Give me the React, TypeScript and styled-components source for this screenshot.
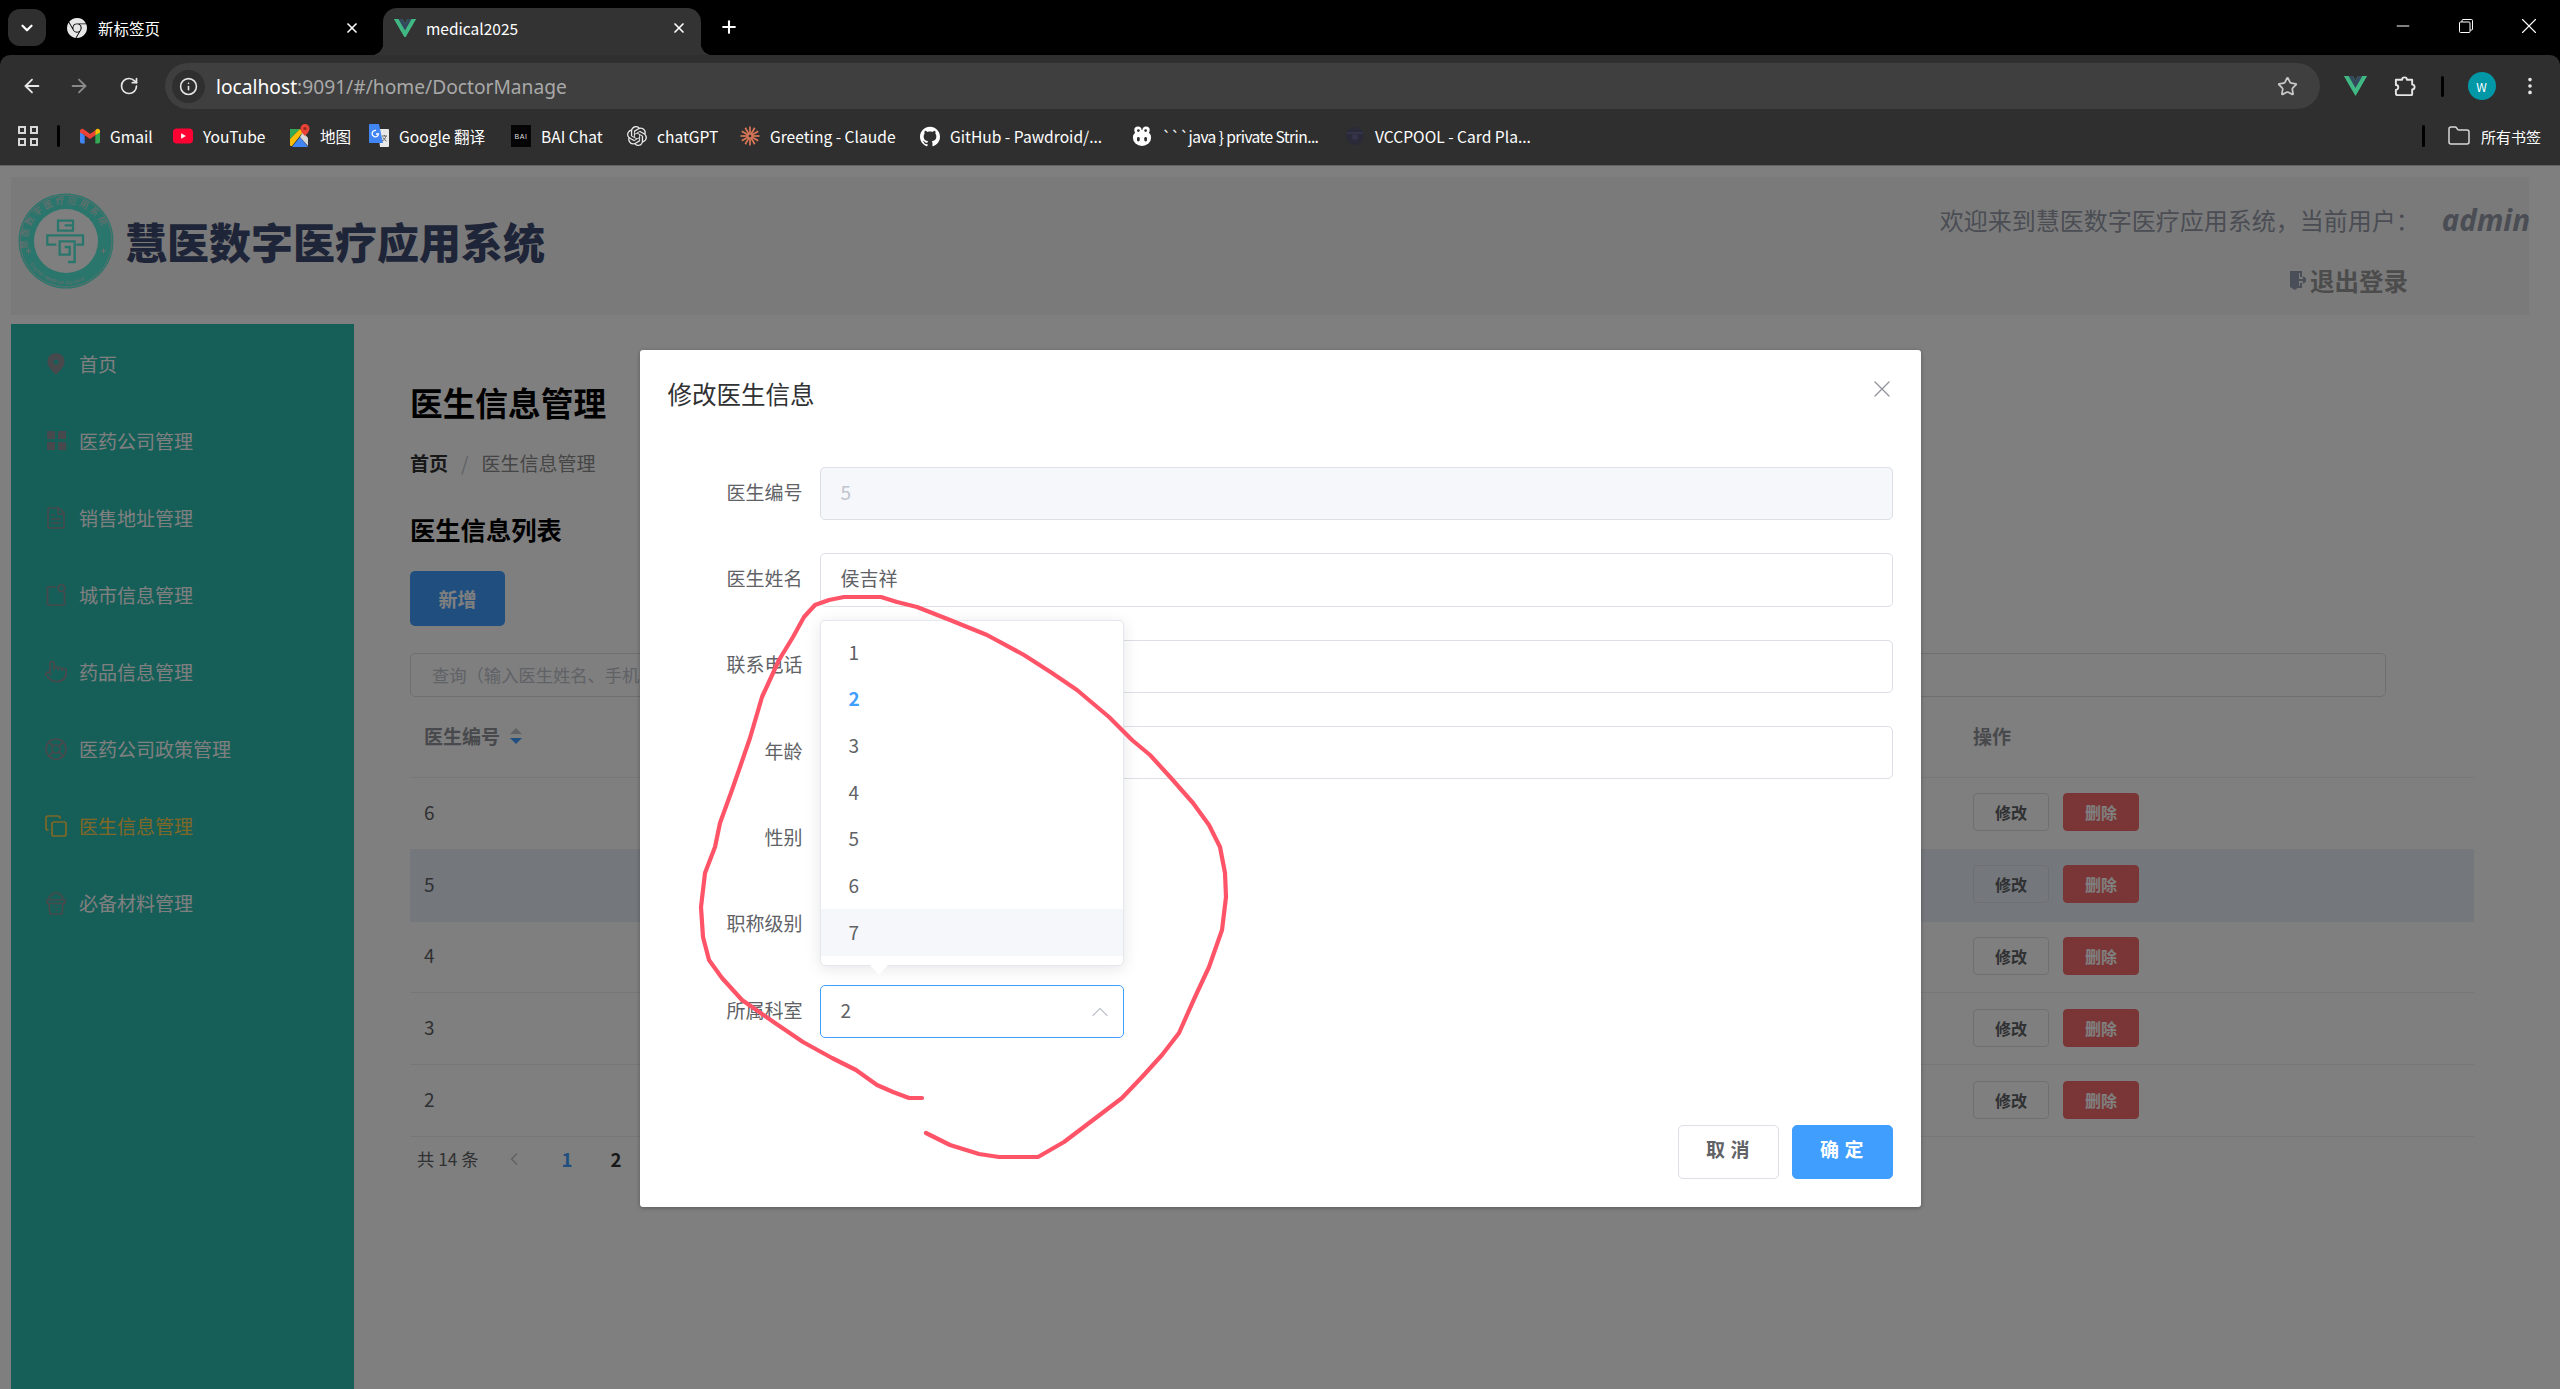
import React from "react";
import styled, { createGlobalStyle } from "styled-components";
import {
  ArrowLeft,
  ArrowRight,
  ChevronDown,
  ChevronLeft,
  ChevronUp,
  Copy,
  EllipsisVertical,
  FileText,
  Folder,
  Info,
  LifeBuoy,
  Minus,
  Plus,
  Pointer,
  RotateCw,
  Star,
  X,
} from "lucide-react";
import { SiGithub, SiGooglechrome, SiOpenai } from "react-icons/si";

const CJK = `"Noto Sans CJK SC", "Noto Sans", sans-serif`;

const GlobalStyle = createGlobalStyle`
  html, body { margin: 0; padding: 0; width: 2560px; height: 1389px; overflow: hidden; background: #000; }
  * { box-sizing: border-box; }
  body { font-family: ${CJK}; }
`;

const Root = styled.div`
  position: relative;
  width: 2560px;
  height: 1389px;
  display: flex;
  flex-direction: column;
`;

/* ---------- browser chrome ---------- */
const TabStrip = styled.div`
  height: 55px;
  background: #000;
  display: flex;
  align-items: flex-end;
  padding-left: 8px;
  color: #fff;
`;
const TabSwitcher = styled.div`
  width: 38px;
  height: 37px;
  margin-bottom: 9px;
  border-radius: 12px;
  background: #2f2f2f;
  display: flex;
  align-items: center;
  justify-content: center;
`;
const Tab = styled.div<{ $active?: boolean }>`
  position: relative;
  width: ${(p) => (p.$active ? 318 : 337)}px;
  height: 47px;
  display: flex;
  align-items: center;
  padding-left: ${(p) => (p.$active ? 11 : 21)}px;
  padding-bottom: 7px;
  border-radius: 14px 14px 0 0;
  background: ${(p) => (p.$active ? "#333" : "transparent")};
  font-size: 15.5px;
  ${(p) =>
    p.$active &&
    `
    &::before, &::after { content: ""; position: absolute; bottom: 0; width: 12px; height: 12px; }
    &::before { left: -12px; background: radial-gradient(circle at 0 0, transparent 12px, #333 12.5px); }
    &::after { right: -12px; background: radial-gradient(circle at 100% 0, transparent 12px, #333 12.5px); }
  `}
`;
const TabTitle = styled.span<{ $gap: number }>`
  flex: 1;
  margin-left: ${(p) => p.$gap}px;
`;
const TabClose = styled.div<{ $right: number }>`
  width: 16px;
  height: 16px;
  margin-right: ${(p) => p.$right}px;
  display: flex;
`;
const NewTab = styled.div`
  margin-left: 18px;
  margin-bottom: 10px;
  height: 36px;
  display: flex;
  align-items: center;
`;
const WindowControls = styled.div`
  margin-left: auto;
  height: 55px;
  display: flex;
  align-items: center;
  padding-bottom: 4px;
`;
const WindowButton = styled.div`
  width: 63px;
  display: flex;
  justify-content: center;
`;

const Toolbar = styled.div`
  height: 54px;
  background: #2f2f2f;
  border-radius: 10px 10px 0 0;
  display: flex;
  align-items: flex-start;
  padding: 8px 0 0 21px;
  color: #e6e6e6;
`;
const NavButton = styled.div<{ $w: number; $dim?: boolean }>`
  width: ${(p) => p.$w}px;
  height: 46px;
  display: flex;
  align-items: center;
  color: ${(p) => (p.$dim ? "#8a8a8a" : "#e6e6e6")};
`;
const AddressBar = styled.div`
  width: 2155px;
  height: 46px;
  border-radius: 23px;
  background: #3f3f3f;
  display: flex;
  align-items: center;
  padding: 0 22px 0 7px;
  margin-left: -1px;
`;
const SiteInfo = styled.div`
  width: 33px;
  height: 33px;
  border-radius: 50%;
  background: #2f2f2f;
  display: flex;
  align-items: center;
  justify-content: center;
`;
const Url = styled.div`
  flex: 1;
  margin-left: 11px;
  font-family: "Noto Sans", sans-serif;
  font-size: 19.2px;
  color: #a9a9a9;
  b { font-weight: 400; color: #fff; }
`;
const ToolIcons = styled.div`
  height: 46px;
  display: flex;
  align-items: center;
  padding-left: 24px;
`;
const ToolDivider = styled.div`
  width: 3px;
  height: 21px;
  border-radius: 2px;
  background: #000;
`;
const Avatar = styled.div`
  width: 28px;
  height: 28px;
  border-radius: 50%;
  background: #0097a7;
  color: #fff;
  font-size: 12px;
  display: flex;
  align-items: center;
  justify-content: center;
`;
const ToolSlot = styled.div<{ $w: number }>`
  width: ${(p) => p.$w}px;
  display: flex;
  justify-content: center;
`;

const BookmarkBar = styled.div`
  height: 57px;
  background: #2f2f2f;
  border-bottom: 1px solid #636363;
  display: flex;
  align-items: center;
  padding: 0 0 2px 18px;
  color: #fff;
  font-size: 15.6px;
`;
const AppsIcon = styled.div`
  width: 20px;
  height: 20px;
  display: grid;
  grid-template-columns: 8px 8px;
  grid-template-rows: 8px 8px;
  gap: 4px;
  span { border: 2px solid #d8d8d8; }
`;
const BarDivider = styled.div<{ $left: number; $right: number }>`
  width: 3px;
  height: 22px;
  border-radius: 2px;
  background: #000;
  margin: 0 ${(p) => p.$right}px 0 ${(p) => p.$left}px;
`;
const Bookmark = styled.div<{ $w: number; $track?: number }>`
  width: ${(p) => p.$w}px;
  display: flex;
  align-items: center;
  gap: 10px;
  white-space: nowrap;
  letter-spacing: ${(p) => p.$track ?? 0}px;
`;
const BookmarkIcon = styled.div`
  width: 20px;
  height: 22px;
  display: flex;
  align-items: center;
  justify-content: center;
  flex: none;
`;
const AllBookmarks = styled.div`
  display: flex;
  align-items: center;
  gap: 10px;
  font-size: 15px;
`;

/* ---------- page under the dialog ---------- */
const Page = styled.div`
  position: relative;
  flex: 1;
  background: #fff;
  padding: 11px 0 0 11px;
  overflow: hidden;
`;
const Header = styled.header`
  width: 2518px;
  height: 138px;
  background: #f5f5f5;
  display: flex;
  justify-content: space-between;
`;
const Brand = styled.div`
  display: flex;
  align-items: center;
  padding: 0 0 10px 7px;
`;
const BrandName = styled.div`
  margin-left: 11px;
  font-size: 42px;
  font-weight: 900;
  letter-spacing: 0;
  color: #3e4a70;
  line-height: 56px;
`;
const UserBox = styled.div`
  display: flex;
  flex-direction: column;
  align-items: flex-end;
  padding-top: 22px;
  gap: 21px;
`;
const Welcome = styled.div`
  height: 40px;
  display: flex;
  align-items: center;
  gap: 22px;
  font-size: 24px;
  color: #969ba8;
  margin-right: -1px;
  white-space: nowrap;
`;
const UserName = styled.span`
  font-family: "Noto Sans", sans-serif;
  font-size: 29.5px;
  font-weight: 700;
  font-style: italic;
`;
const Logout = styled.div`
  height: 40px;
  display: flex;
  align-items: center;
  gap: 4px;
  margin-right: 121px;
  font-size: 24.5px;
  font-weight: 700;
  color: #999;
`;
const Body = styled.div`
  display: flex;
  margin-top: 9px;
`;
const Sidebar = styled.nav`
  width: 343px;
  height: 1065px;
  background: #2cbdb0;
  padding-top: 1px;
`;
const NavItem = styled.div<{ $active?: boolean }>`
  height: 77px;
  display: flex;
  align-items: center;
  padding-left: 33px;
  font-size: 19px;
  color: ${(p) => (p.$active ? "#ffd04b" : "#fff")};
`;
const NavIcon = styled.div<{ $active?: boolean }>`
  width: 24px;
  height: 24px;
  margin-right: 11px;
  display: flex;
  align-items: center;
  justify-content: center;
  color: ${(p) => (p.$active ? "#ffd04b" : "#909399")};
`;
const Main = styled.main`
  flex: 1;
  padding: 56px 86px 0 56px;
`;
const PageTitle = styled.h2`
  margin: 0;
  font-size: 32.7px;
  line-height: 44px;
  font-weight: 700;
  color: #000;
`;
const Crumbs = styled.div`
  margin-top: 26px;
  height: 24px;
  display: flex;
  align-items: center;
  font-size: 19px;
  color: #8a8a8a;
`;
const CrumbHome = styled.b`
  color: #303133;
`;
const CrumbSep = styled.span`
  margin: 0 13px;
  color: #c0c4cc;
`;
const SectionTitle = styled.h3`
  margin: 38px 0 0;
  font-size: 25.3px;
  line-height: 34px;
  font-weight: 700;
  color: #000;
`;
const AddButton = styled.div`
  margin-top: 25px;
  width: 95px;
  height: 55px;
  border-radius: 5px;
  background: #409eff;
  color: #fff;
  font-size: 19px;
  font-weight: 700;
  display: flex;
  align-items: center;
  justify-content: center;
`;
const Search = styled.div`
  margin-top: 27px;
  width: 1976px;
  height: 44px;
  border: 1px solid #dcdfe6;
  border-radius: 5px;
  display: flex;
  align-items: center;
  padding: 0 0 2px 21px;
  font-size: 17.3px;
  color: #c0c4cc;
`;
const TableHead = styled.div`
  height: 81px;
  display: grid;
  grid-template-columns: 1563px 1fr;
  align-items: center;
  border-bottom: 1px solid #ebeef5;
  padding-bottom: 3px;
  font-size: 19px;
  font-weight: 700;
  color: #909399;
`;
const HeadCell = styled.div`
  display: flex;
  align-items: center;
  padding-left: 14px;
`;
const ActionHead = styled.div``;
const SortCaret = styled.div`
  margin-left: 10px;
  display: flex;
  flex-direction: column;
  gap: 4px;
`;
const CaretUp = styled.div`
  width: 0;
  height: 0;
  border: 6px solid transparent;
  border-top: 0;
  border-bottom: 6px solid #c0c4cc;
`;
const CaretDown = styled.div`
  width: 0;
  height: 0;
  border: 6px solid transparent;
  border-bottom: 0;
  border-top: 6px solid #409eff;
`;
const Row = styled.div<{ $current?: boolean }>`
  height: 71.8px;
  display: grid;
  grid-template-columns: 1563px 1fr;
  align-items: center;
  border-bottom: 1px solid #ebeef5;
  background: ${(p) => (p.$current ? "#e8eef8" : "transparent")};
  font-size: 19px;
  color: #606266;
`;
const IdCell = styled.div`
  padding: 0 0 4px 14px;
`;
const RowActions = styled.div`
  display: flex;
  gap: 14px;
  margin-bottom: 2px;
`;
const SmallButton = styled.div<{ $danger?: boolean }>`
  width: 76px;
  height: 38px;
  border-radius: 4px;
  border: 1px solid ${(p) => (p.$danger ? "#f56c6c" : "#dcdfe6")};
  background: ${(p) => (p.$danger ? "#f56c6c" : "transparent")};
  color: ${(p) => (p.$danger ? "#fff" : "#606266")};
  font-size: 16px;
  font-weight: 700;
  display: flex;
  align-items: center;
  justify-content: center;
`;
const Pagination = styled.div`
  height: 46px;
  display: flex;
  align-items: center;
  padding: 0 0 2px 7px;
  font-size: 17.3px;
  color: #606266;
`;
const PageArrow = styled.div`
  margin-left: 25px;
  display: flex;
  color: #c0c4cc;
`;
const PageNumber = styled.b<{ $active?: boolean; $gap: number }>`
  margin-left: ${(p) => p.$gap}px;
  font-size: 18.67px;
  color: ${(p) => (p.$active ? "#409eff" : "#303133")};
`;

/* ---------- dialog ---------- */
const Overlay = styled.div`
  position: absolute;
  inset: 0;
  background: rgba(0, 0, 0, 0.5);
  display: flex;
  justify-content: center;
  padding-top: 184px;
`;
const Dialog = styled.div`
  position: relative;
  width: 1281px;
  height: 857px;
  border-radius: 3px;
  background: #fff;
  box-shadow: 0 1px 4px rgba(0, 0, 0, 0.3);
  display: flex;
  flex-direction: column;
  padding: 0 28px 28px;
`;
const DialogHeader = styled.div`
  height: 117px;
  display: flex;
  justify-content: space-between;
  padding-top: 26px;
`;
const DialogTitle = styled.div`
  font-size: 24.5px;
  line-height: 36px;
  color: #303133;
`;
const DialogClose = styled.div`
  display: flex;
  color: #909399;
  margin: -1px -3px 0 0;
`;
const FormRow = styled.div`
  display: flex;
  align-items: center;
  height: 53.33px;
  margin-bottom: 33px;
`;
const FormLabel = styled.div`
  width: 135px;
  margin-right: 17px;
  padding-bottom: 5px;
  text-align: right;
  font-size: 19px;
  color: #606266;
  white-space: nowrap;
`;
const Field = styled.div<{ $disabled?: boolean; $short?: boolean; $focus?: boolean }>`
  width: ${(p) => (p.$short ? "304px" : "1073px")};
  height: 53.33px;
  border: 1px solid ${(p) => (p.$focus ? "#409eff" : "#dcdfe6")};
  border-radius: 5px;
  background: ${(p) => (p.$disabled ? "#f5f7fa" : "#fff")};
  color: ${(p) => (p.$disabled ? "#c0c4cc" : "#606266")};
  font-size: 19px;
  display: flex;
  align-items: center;
  justify-content: space-between;
  padding: 0 9px 0 20px;
`;
const FieldText = styled.span`
  padding-bottom: 5px;
`;
const Footer = styled.div`
  margin-top: auto;
  display: flex;
  justify-content: flex-end;
  gap: 13px;
`;
const DialogButton = styled.div<{ $primary?: boolean }>`
  width: 101px;
  height: 54px;
  border-radius: 5px;
  border: 1px solid ${(p) => (p.$primary ? "#409eff" : "#dcdfe6")};
  background: ${(p) => (p.$primary ? "#409eff" : "#fff")};
  color: ${(p) => (p.$primary ? "#fff" : "#606266")};
  font-size: 19px;
  font-weight: 700;
  letter-spacing: 0.5px;
  white-space: pre;
  display: flex;
  align-items: center;
  justify-content: center;
  padding-bottom: 7px;
`;
const Dropdown = styled.div`
  position: absolute;
  left: 180px;
  top: 270px;
  width: 304px;
  height: 346px;
  padding-top: 8px;
  background: #fff;
  border: 1px solid #e4e7ed;
  border-radius: 5px;
  box-shadow: 0 3px 16px rgba(0, 0, 0, 0.1);
  &::after {
    content: "";
    position: absolute;
    left: 52px;
    bottom: -7px;
    width: 12px;
    height: 12px;
    background: #fff;
    transform: rotate(45deg);
  }
`;
const Option = styled.div<{ $selected?: boolean; $hover?: boolean }>`
  height: 46.67px;
  display: flex;
  align-items: center;
  padding: 0 0 2px 28px;
  font-size: 19px;
  font-weight: ${(p) => (p.$selected ? 700 : 400)};
  color: ${(p) => (p.$selected ? "#409eff" : "#606266")};
  background: ${(p) => (p.$hover ? "#f5f7fa" : "transparent")};
`;
const Scribble = styled.svg`
  position: absolute;
  left: 0;
  top: 0;
  pointer-events: none;
`;

/* ---------- small drawings ---------- */
const VueLogo = ({ size }: { size: number }) => (
  <svg width={size} height={size * 0.86} viewBox="0 0 256 221">
    <path d="M204.8 0H256L128 220.8 0 0h97.92L128 51.2 157.44 0h47.36Z" fill="#41B883" />
    <path d="M0 0l128 220.8L256 0h-51.2L128 132.48 50.56 0H0Z" fill="#41B883" />
    <path d="M50.56 0L128 133.12 204.8 0h-47.36L128 51.2 97.92 0H50.56Z" fill="#35495E" />
  </svg>
);
const PuzzlePiece = () => (
  <svg width="23" height="23" viewBox="0 0 24 24" fill="none" stroke="#e6e6e6" strokeWidth="2" strokeLinejoin="round">
    <path d="M3 5h6.500a2.500 2.500 0 0 1 5 0H20v5a2.500 2.500 0 0 1 0 5v5a1 1 0 0 1-1 1H5a2 2 0 0 1-2-2v-3.500a2.500 2.500 0 0 0 0-5z" />
  </svg>
);
const RestoreIcon = () => (
  <svg width="14" height="14" viewBox="0 0 14 14" fill="none" stroke="#fff" strokeWidth="1">
    <rect x="0.500" y="3" width="10.500" height="10.500" rx="1" />
    <path d="M3 3V1.500a1 1 0 0 1 1-1h8.500a1 1 0 0 1 1 1V10a1 1 0 0 1-1 1H11" />
  </svg>
);
const GmailIcon = () => (
  <svg width="20" height="16" viewBox="0 0 24 18">
    <path d="M0 4v12a2 2 0 0 0 2 2h3.6V8z" fill="#4285f4" />
    <path d="M24 4v12a2 2 0 0 1-2 2h-3.6V8z" fill="#34a853" />
    <path d="M0 3C0 .8 2.5-.5 4.3.9L12 6.7V11L0 4.8Z" fill="#ea4335" />
    <path d="M5.6 2 12 6.7 18.4 2V8L12 12.6 5.6 8Z" fill="#ea4335" />
    <path d="M24 3C24 .8 21.5-.5 19.700.9L18.400 2V8L24 4.800Z" fill="#fbbc04" />
  </svg>
);
const YoutubeIcon = () => (
  <svg width="21" height="16" viewBox="0 0 21 16">
    <rect width="21" height="16" rx="4" fill="#ff0033" />
    <path d="M8.500 5v6l5-3z" fill="#fff" />
  </svg>
);
const MapsIcon = () => (
  <svg width="20" height="24" viewBox="0 0 20 24">
    <path d="M0 5h10l-10 10z" fill="#34a853" />
    <path d="M0 15 10 5l3 3L2 22H1a1 1 0 0 1-1-1z" fill="#fbbc04" />
    <path d="M2 23 10 13l8 10z" fill="#4285f4" />
    <path d="M13 8l5 6v8L10 13z" fill="#d9d9d9" />
    <path d="M15 0a4.500 4.500 0 0 0-4.500 4.500C10.500 8 15 12 15 12s4.500-4 4.500-7.500A4.500 4.500 0 0 0 15 0z" fill="#ea4335" />
    <circle cx="15" cy="4.500" r="1.600" fill="#8c2a22" />
  </svg>
);
const TranslateIcon = () => (
  <svg width="20" height="24" viewBox="0 0 20 24">
    <path d="M9 5h10a1 1 0 0 1 1 1v16a1 1 0 0 1-1 1H11z" fill="#e8e8e8" />
    <path d="M1 0h9l4 19H1a1 1 0 0 1-1-1V1a1 1 0 0 1 1-1z" fill="#4285f4" />
    <path d="M7 6.500A3.200 3.200 0 1 0 9.500 10H7" fill="none" stroke="#fff" strokeWidth="1.300" />
    <path d="M13 12h5M15.500 11v1M17 12c-.6 2.500-2 4-4 5M14 13.500c.8 1.600 2 2.800 3.500 3.500" fill="none" stroke="#666" strokeWidth="1" />
  </svg>
);
const BaiIcon = styled.div`
  width: 22px;
  height: 22px;
  background: #050505;
  color: #ddd;
  font-size: 7px;
  font-family: "Liberation Sans", sans-serif;
  display: flex;
  align-items: center;
  justify-content: center;
  letter-spacing: 0.5px;
`;
const ClaudeIcon = () => (
  <svg width="20" height="22" viewBox="-10 -11 20 22">
    {[0, 30, 60, 90, 120, 150, 180, 210, 240, 270, 300, 330].map((a) => (
      <line key={a} x1="0" y1="-1.500" x2="0" y2="-9.500" stroke="#d97757" strokeWidth="1.700" transform={`rotate(${a})`} />
    ))}
  </svg>
);
const PigIcon = () => (
  <svg width="22" height="24" viewBox="0 0 22 24">
    <circle cx="6.500" cy="5.500" r="4" fill="#fff" />
    <circle cx="15.500" cy="5.500" r="4" fill="#fff" />
    <ellipse cx="11" cy="14" rx="10" ry="9" fill="#fff" />
    <circle cx="7" cy="6" r="1.500" fill="#2f2f2f" />
    <circle cx="15" cy="6" r="1.500" fill="#2f2f2f" />
    <rect x="5.500" y="13" width="3" height="5" rx="1.500" fill="#2f2f2f" />
    <rect x="13.500" y="13" width="3" height="5" rx="1.500" fill="#2f2f2f" />
  </svg>
);
const VccIcon = () => (
  <svg width="20" height="24" viewBox="0 0 20 24">
    <circle cx="10" cy="12" r="9" fill="#2a2a38" />
    <path d="M2 9h16" stroke="#33334a" strokeWidth="2" />
    <circle cx="10" cy="13" r="3" fill="#34344a" />
  </svg>
);
const DoorIcon = () => (
  <svg width="16" height="24" viewBox="0 0 16 24">
    <path d="M0 3h6.500L9 5v14l-4 3-5-3z" fill="#949cb0" />
    <path d="M6 4h5v5M11 15v4H8M9 12h7M13 9l3 3-3 3" fill="none" stroke="#949cb0" strokeWidth="2" />
  </svg>
);
const LocationIcon = () => (
  <svg width="18" height="22" viewBox="0 0 18 22">
    <path fillRule="evenodd" d="M9 0a8.700 8.700 0 0 0-8.700 8.700C.3 14.500 9 21.500 9 21.500s8.700-7 8.700-12.800A8.700 8.700 0 0 0 9 0zm0 6.500a2.500 2.500 0 1 1 0 5 2.500 2.500 0 0 1 0-5z" fill="currentColor" />
  </svg>
);
const GridIcon = () => (
  <svg width="19" height="19" viewBox="0 0 19 19" fill="currentColor">
    <rect width="8" height="8" />
    <rect x="11" width="8" height="8" />
    <rect y="11" width="8" height="8" />
    <rect x="11" y="11" width="8" height="8" />
  </svg>
);
const NoteIcon = () => (
  <svg width="20" height="22" viewBox="0 0 20 22" fill="none" stroke="currentColor" strokeWidth="1.700">
    <path d="M10 3H3a1.500 1.500 0 0 0-1.500 1.500v15A1.500 1.500 0 0 0 3 21h14a1.500 1.500 0 0 0 1.500-1.500V8" />
    <circle cx="15.500" cy="4.200" r="3.300" />
  </svg>
);
const BucketIcon = () => (
  <svg width="20" height="24" viewBox="0 0 20 24" fill="none" stroke="currentColor" strokeWidth="1.700">
    <path d="M3 9a7 7 0 0 1 14 0" />
    <path d="M1 9h18v3.500H1z" />
    <path d="M3 12.500 4 23h12l1-10.500" />
    <path d="M8 16l1 1M12 15.500l-.8 1M10 19l1 1" />
  </svg>
);
const LogoMark = () => (
  <svg width="96" height="96" viewBox="0 0 96 96">
    <defs>
      <path id="ringTop" d="M9.500 56A39 39 0 1 1 86.500 56" />
      <path id="ringBottom" d="M8 62A42 42 0 0 0 88 62" />
    </defs>
    <circle cx="48" cy="48" r="47.500" fill="#54ecd8" />
    <circle cx="48" cy="48" r="46" fill="none" stroke="#ddd" strokeWidth="0.700" />
    <circle cx="48" cy="48" r="32" fill="#fff" />
    <text fontSize="9" fill="#ddd" fontFamily={CJK}>
      <textPath href="#ringTop" textLength="112">慧医数字医疗应用系统</textPath>
    </text>
    <text fontSize="5" fill="#ddd" fontFamily="'Liberation Sans', sans-serif">
      <textPath href="#ringBottom" startOffset="10" textLength="62">Digital Medical System</textPath>
    </text>
    <path d="M8 58h5M10.500 55.500v5M83 58h5M85.500 55.500v5" stroke="#ddd" strokeWidth="1" />
    <g transform="scale(0.3333) translate(-10 -25)" fill="none" stroke="#54ecd8" strokeWidth="7">
      <path d="M175 122H150M175 135V108H130V138H178" />
      <path d="M125 180H98V152H205V180H185" />
      <path d="M150 187H165V210H135V170H180V232H160" />
    </g>
  </svg>
);

const menu = [
  { label: "首页", icon: <LocationIcon /> },
  { label: "医药公司管理", icon: <GridIcon /> },
  { label: "销售地址管理", icon: <FileText size={24} strokeWidth={1.6} /> },
  { label: "城市信息管理", icon: <NoteIcon /> },
  { label: "药品信息管理", icon: <Pointer size={25} strokeWidth={1.7} /> },
  { label: "医药公司政策管理", icon: <LifeBuoy size={24} strokeWidth={1.7} /> },
  { label: "医生信息管理", icon: <Copy size={24} strokeWidth={1.7} />, active: true },
  { label: "必备材料管理", icon: <BucketIcon /> },
];

const bookmarks = [
  { label: "Gmail", w: 93, icon: <GmailIcon /> },
  { label: "YouTube", w: 117, icon: <YoutubeIcon /> },
  { label: "地图", w: 79, icon: <MapsIcon /> },
  { label: "Google 翻译", w: 142, icon: <TranslateIcon /> },
  { label: "BAI Chat", w: 116, icon: <BaiIcon>BAI</BaiIcon> },
  { label: "chatGPT", w: 113, icon: <SiOpenai size={20} color="#e8e8e8" /> },
  { label: "Greeting - Claude", w: 180, icon: <ClaudeIcon /> },
  { label: "GitHub - Pawdroid/...", w: 212, icon: <SiGithub size={21} color="#fff" /> },
  { label: "```java } private Strin...", w: 213, icon: <PigIcon />, track: -0.6 },
  { label: "VCCPOOL - Card Pla...", w: 1077, icon: <VccIcon /> },
];

const formRows = [
  { label: "医生编号", value: "5", disabled: true },
  { label: "医生姓名", value: "侯吉祥" },
  { label: "联系电话", value: "" },
  { label: "年龄", value: "" },
  { label: "性别", value: "", short: true },
  { label: "职称级别", value: "", short: true },
];

const scribble =
  "922,1098 909,1098 893,1092 877,1085 856,1070 832,1058 803,1042 775,1023 742,1000 722,978 709,960 703,937 701,907 705,873 715,847 720,823 732,790 740,767 750,738 762,697 779,660 793,637 804,617 815,605 829,600 844,597 881,597 897,602 917,607 950,620 987,635 1024,655 1052,673 1077,690 1109,717 1132,740 1150,755 1171,778 1193,803 1209,825 1220,847 1225,873 1226,897 1222,930 1209,967 1195,997 1179,1033 1162,1055 1142,1077 1122,1098 1097,1117 1064,1142 1038,1157 999,1157 979,1154 950,1145 926,1133";

const App: React.FC = () => {
  return (
    <Root>
      <GlobalStyle />
      <TabStrip>
        <TabSwitcher>
          <ChevronDown size={18} strokeWidth={3} />
        </TabSwitcher>
        <Tab>
          <SiGooglechrome size={20} color="#e8e8e8" />
          <TabTitle $gap={11}>新标签页</TabTitle>
          <TabClose $right={23}>
            <X size={16} strokeWidth={2.5} />
          </TabClose>
        </Tab>
        <Tab $active>
          <VueLogo size={22} />
          <TabTitle $gap={10}>medical2025</TabTitle>
          <TabClose $right={14}>
            <X size={16} strokeWidth={2.5} />
          </TabClose>
        </Tab>
        <NewTab>
          <Plus size={20} strokeWidth={2.5} />
        </NewTab>
        <WindowControls>
          <WindowButton>
            <Minus size={20} strokeWidth={1.2} />
          </WindowButton>
          <WindowButton>
            <RestoreIcon />
          </WindowButton>
          <WindowButton>
            <X size={26} strokeWidth={1} />
          </WindowButton>
        </WindowControls>
      </TabStrip>

      <Toolbar>
        <NavButton $w={47}>
          <ArrowLeft size={22} />
        </NavButton>
        <NavButton $w={51} $dim>
          <ArrowRight size={22} />
        </NavButton>
        <NavButton $w={47}>
          <RotateCw size={20} />
        </NavButton>
        <AddressBar>
          <SiteInfo>
            <Info size={19} />
          </SiteInfo>
          <Url>
            <b>localhost</b>:9091/#/home/DoctorManage
          </Url>
          <Star size={21} color="#c8c8c8" />
        </AddressBar>
        <ToolIcons>
          <VueLogo size={23} />
          <ToolSlot $w={74}>
            <PuzzlePiece />
          </ToolSlot>
          <ToolDivider />
          <ToolSlot $w={75}>
            <Avatar>W</Avatar>
          </ToolSlot>
          <ToolSlot $w={22}>
            <EllipsisVertical size={22} />
          </ToolSlot>
        </ToolIcons>
      </Toolbar>

      <BookmarkBar>
        <AppsIcon>
          <span />
          <span />
          <span />
          <span />
        </AppsIcon>
        <BarDivider $left={19} $right={20} />
        {bookmarks.map((b) => (
          <Bookmark key={b.label} $w={b.w} $track={b.track}>
            <BookmarkIcon>{b.icon}</BookmarkIcon>
            {b.label}
          </Bookmark>
        ))}
        <BarDivider $left={0} $right={22} />
        <AllBookmarks>
          <Folder size={24} strokeWidth={1.5} color="#d8d8d8" />
          所有书签
        </AllBookmarks>
      </BookmarkBar>

      <Page>
        <Header>
          <Brand>
            <LogoMark />
            <BrandName>慧医数字医疗应用系统</BrandName>
          </Brand>
          <UserBox>
            <Welcome>
              欢迎来到慧医数字医疗应用系统，当前用户：
              <UserName>admin</UserName>
            </Welcome>
            <Logout>
              <DoorIcon />
              退出登录
            </Logout>
          </UserBox>
        </Header>
        <Body>
          <Sidebar>
            {menu.map((m) => (
              <NavItem key={m.label} $active={m.active}>
                <NavIcon $active={m.active}>{m.icon}</NavIcon>
                {m.label}
              </NavItem>
            ))}
          </Sidebar>
          <Main>
            <PageTitle>医生信息管理</PageTitle>
            <Crumbs>
              <CrumbHome>首页</CrumbHome>
              <CrumbSep>/</CrumbSep>
              医生信息管理
            </Crumbs>
            <SectionTitle>医生信息列表</SectionTitle>
            <AddButton>新增</AddButton>
            <Search>查询（输入医生姓名、手机号）</Search>
            <TableHead>
              <HeadCell>
                医生编号
                <SortCaret>
                  <CaretUp />
                  <CaretDown />
                </SortCaret>
              </HeadCell>
              <ActionHead>操作</ActionHead>
            </TableHead>
            {[6, 5, 4, 3, 2].map((id) => (
              <Row key={id} $current={id === 5}>
                <IdCell>{id}</IdCell>
                <RowActions>
                  <SmallButton>修改</SmallButton>
                  <SmallButton $danger>删除</SmallButton>
                </RowActions>
              </Row>
            ))}
            <Pagination>
              共 14 条
              <PageArrow>
                <ChevronLeft size={20} />
              </PageArrow>
              <PageNumber $active $gap={38}>1</PageNumber>
              <PageNumber $gap={38}>2</PageNumber>
            </Pagination>
          </Main>
        </Body>

        <Overlay>
          <Dialog>
            <DialogHeader>
              <DialogTitle>修改医生信息</DialogTitle>
              <DialogClose>
                <X size={28} strokeWidth={1.1} />
              </DialogClose>
            </DialogHeader>
            {formRows.map((r) => (
              <FormRow key={r.label}>
                <FormLabel>{r.label}</FormLabel>
                <Field $disabled={r.disabled} $short={r.short}>
                  <FieldText>{r.value}</FieldText>
                </Field>
              </FormRow>
            ))}
            <FormRow>
              <FormLabel>所属科室</FormLabel>
              <Field $short $focus>
                <FieldText>2</FieldText>
                <ChevronUp size={28} strokeWidth={1} color="#c0c4cc" />
              </Field>
            </FormRow>
            <Footer>
              <DialogButton>取 消</DialogButton>
              <DialogButton $primary>确 定</DialogButton>
            </Footer>
            <Dropdown>
              {[1, 2, 3, 4, 5, 6, 7].map((n) => (
                <Option key={n} $selected={n === 2} $hover={n === 7}>
                  {n}
                </Option>
              ))}
            </Dropdown>
          </Dialog>
        </Overlay>
      </Page>

      <Scribble width="2560" height="1389">
        <polyline points={scribble} fill="none" stroke="#ff5468" strokeWidth="4.2" strokeLinecap="round" strokeLinejoin="round" />
      </Scribble>
    </Root>
  );
};

export default App;
